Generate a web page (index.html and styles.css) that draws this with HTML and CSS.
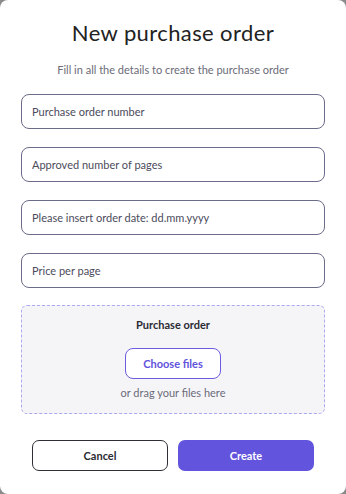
FILE: index.html
```html
<!DOCTYPE html>
<html lang="en">
<head>
    <meta charset="UTF-8">
    <meta name="viewport" content="width=device-width, initial-scale=1.0">
    <title>New purchase order</title>
    <link rel="stylesheet" href="styles.css">
</head>
<body>
    <div class="modal">
        <h2 class="modal-title">New purchase order</h2>
        <p class="modal-subtitle">Fill in all the details to create the purchase order</p>

        <form class="order-form">
            <input class="field" type="text" placeholder="Purchase order number">
            <input class="field" type="text" placeholder="Approved number of pages">
            <input class="field" type="text" placeholder="Please insert order date: dd.mm.yyyy">
            <input class="field" type="text" placeholder="Price per page">

            <div class="dropzone">
                <div class="dropzone-title">Purchase order</div>
                <button type="button" class="choose-button">Choose files</button>
                <div class="dropzone-hint">or drag your files here</div>
            </div>

            <div class="actions">
                <button type="button" class="btn btn-cancel">Cancel</button>
                <button type="submit" class="btn btn-create">Create</button>
            </div>
        </form>
    </div>
</body>
</html>
```

FILE: styles.css
```css
body {
    margin: 0;
    padding: 0;
    background-color: #8a8a8a;
    font-family: 'Lato', 'Noto Sans', sans-serif;
}

.modal {
    width: 346px;
    height: 494px;
    box-sizing: border-box;
    background: #ffffff;
    border-radius: 8px;
    padding: 20px 21px 0;
    display: flex;
    flex-direction: column;
}

.modal-title {
    margin: 0;
    text-align: center;
    font-size: 22px;
    line-height: 26px;
    font-weight: 400;
    color: #222222;
    letter-spacing: 0.4px;
}

.modal-subtitle {
    margin: 17px 0 0;
    text-align: center;
    font-size: 11px;
    line-height: 14px;
    color: #6b6b78;
}

.order-form {
    margin-top: 17px;
    display: flex;
    flex-direction: column;
}

.field {
    height: 35px;
    box-sizing: border-box;
    margin-bottom: 18px;
    padding: 0 10px;
    border: 1px solid #6b6b8a;
    border-radius: 8px;
    font-family: inherit;
    font-size: 11px;
    color: #333;
    outline: none;
}

.field::placeholder {
    color: #4b4b5c;
}

.dropzone {
    margin-top: -1px;
    height: 109px;
    box-sizing: border-box;
    border: 1px dashed #a9a9f2;
    border-radius: 6px;
    background: #f5f5f8;
    display: flex;
    flex-direction: column;
    align-items: center;
    padding-top: 12px;
}

.dropzone-title {
    font-size: 11px;
    line-height: 14px;
    font-weight: 700;
    color: #2b2b33;
}

.choose-button {
    margin-top: 16px;
    width: 96px;
    height: 31px;
    border: 1px solid #6a5ce0;
    border-radius: 8px;
    background: #ffffff;
    color: #5f52dc;
    font-family: inherit;
    font-size: 11px;
    font-weight: 700;
    cursor: pointer;
}

.dropzone-hint {
    margin-top: 7px;
    font-size: 11px;
    line-height: 14px;
    color: #6b6b78;
}

.actions {
    margin-top: 26px;
    display: flex;
    justify-content: center;
    gap: 10px;
}

.btn {
    width: 136px;
    height: 31px;
    border-radius: 7px;
    font-family: inherit;
    font-size: 11px;
    font-weight: 700;
    cursor: pointer;
}

.btn-cancel {
    background: #ffffff;
    border: 1px solid #2f2f38;
    color: #2b2b33;
}

.btn-create {
    background: #6254dc;
    border: none;
    color: #ffffff;
}
```
